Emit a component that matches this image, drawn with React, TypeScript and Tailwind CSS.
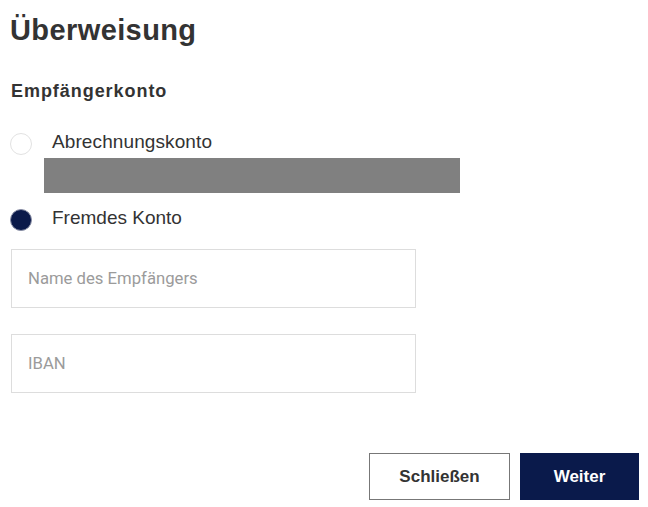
import React from "react";

export default function App() {
  return (
    <div className="w-[648px] h-[507px] bg-white pl-[10px] pr-[9px] font-['Liberation_Sans',Arial,sans-serif] text-[#333333] flex flex-col">
      <h1 className="pt-[13px] text-[29px] leading-[34px] font-bold tracking-[0.4px]">Überweisung</h1>
      <h2 className="mt-[32px] text-[18px] leading-[24px] font-bold tracking-[0.95px] pl-[1px]">Empfängerkonto</h2>

      <label className="mt-[27px] flex items-start">
        <span className="mt-[3px] w-[22px] h-[22px] rounded-full border border-[#e2e2e2] bg-white shrink-0" />
        <span className="ml-[20px] text-[19px] leading-[24px] tracking-[0.1px]">Abrechnungskonto</span>
      </label>
      <div className="mt-[3px] ml-[34px] w-[416px] h-[35px] bg-[#808080]" />

      <label className="mt-[13px] flex items-start">
        <span className="mt-[3px] w-[22px] h-[22px] rounded-full border border-[#8a8fa6] bg-[#0b1a4a] shrink-0" />
        <span className="ml-[20px] text-[19px] leading-[24px]">Fremdes Konto</span>
      </label>

      <input
        className="mt-[18px] ml-[1px] w-[405px] h-[59px] border border-[#dddddd] px-[16px] font-['Roboto',sans-serif] text-[16.7px] text-[#333] placeholder:text-[#9b9b9b] outline-none"
        placeholder="Name des Empfängers"
      />
      <input
        className="mt-[26px] ml-[1px] w-[405px] h-[59px] border border-[#dddddd] px-[16px] font-['Roboto',sans-serif] text-[16.7px] text-[#333] placeholder:text-[#9b9b9b] outline-none"
        placeholder="IBAN"
      />

      <div className="mt-[60px] flex justify-end gap-[10px]">
        <button className="w-[141px] h-[47px] border border-[#777777] bg-white text-[17px] font-bold text-[#333333]">
          Schließen
        </button>
        <button className="w-[119px] h-[47px] bg-[#0a1a4b] text-[17px] font-bold text-white">
          Weiter
        </button>
      </div>
    </div>
  );
}
